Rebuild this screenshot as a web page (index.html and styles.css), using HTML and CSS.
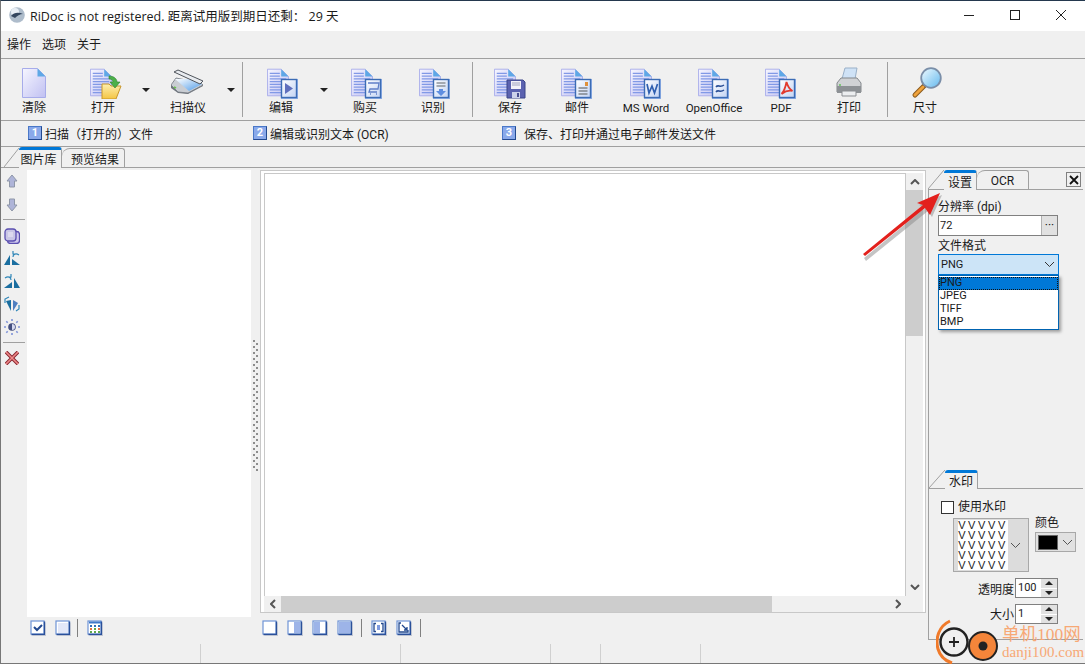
FILE: index.html
```html
<!doctype html>
<html lang="zh-CN">
  <head>
    <meta charset="UTF-8" />
    <title>RiDoc</title>
    <link rel="stylesheet" href="styles.css">
  </head>
  <body>
    <svg class="defs" width="0" height="0">
      <defs>
        <linearGradient id="pg" x1="0" y1="0" x2="1" y2="1">
          <stop offset="0" stop-color="#f6f6ff"/>
          <stop offset="1" stop-color="#c0c0f2"/>
        </linearGradient>
        <linearGradient id="badge" x1="0" y1="0" x2="1" y2="1">
          <stop offset="0" stop-color="#ffffff"/>
          <stop offset="1" stop-color="#c3d4f4"/>
        </linearGradient>
        <linearGradient id="lens" x1="0" y1="0" x2="1" y2="1">
          <stop offset="0" stop-color="#f0fbff"/>
          <stop offset="1" stop-color="#62b8ee"/>
        </linearGradient>
        <linearGradient id="glass" x1="0" y1="0" x2="1" y2="1">
          <stop offset="0" stop-color="#ffffff"/>
          <stop offset="1" stop-color="#4f9be8"/>
        </linearGradient>
        <linearGradient id="folder" x1="0" y1="0" x2="0" y2="1">
          <stop offset="0" stop-color="#fdeeb0"/>
          <stop offset="1" stop-color="#f4c542"/>
        </linearGradient>
        <symbol id="page" viewBox="0 0 24 32">
          <path d="M.5 1.500h15l8 8v21H.5z" fill="url(#pg)" stroke="#a7acea"/>
          <path d="M15.500 1.500l8 8h-8z" fill="#5ea8e6"/>
        </symbol>
        <symbol id="page-lines" viewBox="0 0 24 32">
          <use href="#page" width="24" height="32"/>
          <path d="M3 6h11M3 9h11M3 12h18M3 15h18M3 18h18M3 21h18M3 24h18M3 27h18" stroke="#8199e6" stroke-width="1.300"/>
        </symbol>
        <symbol id="doc-badge" viewBox="0 0 32 32">
          <use href="#page-lines" width="22" height="31"/>
          <rect x="14" y="12" width="17" height="20" fill="#8fb0e6"/>
          <rect x="14.500" y="12.500" width="15" height="18" fill="url(#badge)" stroke="#3c6cb4" stroke-width="1.400"/>
        </symbol>
        <symbol id="mini" viewBox="0 0 16 16">
          <rect x="1" y="1" width="13" height="13" fill="#fff" stroke="#6f94d6" stroke-width="1.200"/>
          <path d="M14.500 1.500v13h-13" fill="none" stroke="#2a509a" stroke-width="1.400"/>
          <path d="M16 3v13H3" fill="none" stroke="#b9bdc6"/>
        </symbol>
      </defs>
    </svg>

    <div class="window">
      <div class="titlebar">
        <svg class="app-icon" width="16" height="16" viewBox="0 0 16 16">
          <circle cx="8" cy="8" r="7.800" fill="#aebccb"/>
          <circle cx="6" cy="5" r="4" fill="#e8eef5"/>
          <path d="M2 9c3-4 8-4 12-2-3 0-6 2-8 4z" fill="#34465f"/>
        </svg>
        <span class="title-text">RiDoc is not registered. 距离试用版到期日还剩： 29 天</span>
        <div class="win-buttons">
          <svg width="12" height="12" viewBox="0 0 12 12"><path d="M1 6.500h10" stroke="#222"/></svg>
          <svg width="12" height="12" viewBox="0 0 12 12"><rect x="1.500" y="1.500" width="9" height="9" fill="none" stroke="#222"/></svg>
          <svg width="12" height="12" viewBox="0 0 12 12"><path d="M1 1l10 10M11 1L1 11" stroke="#222"/></svg>
        </div>
      </div>

      <div class="menubar">
        <span>操作</span>
        <span>选项</span>
        <span>关于</span>
      </div>

      <div class="toolbar">
        <div class="tool w66">
          <svg width="24" height="32"><use href="#page" width="24" height="32"/></svg>
          <span>清除</span>
        </div>
        <div class="tool w72">
          <svg width="34" height="32" class="nudge">
            <use href="#page-lines" x="2" width="22" height="31"/>
            <path d="M14 17h7l2 2h10l-5 13H14z" fill="url(#folder)" stroke="#c8962a"/>
            <path d="M21 9c5 0 8 3 8 6h3l-5 6-5-6h3c0-2-2-3-4-3z" fill="#4cb04a" stroke="#2d7f2c" stroke-width=".6"/>
          </svg>
          <span>打开</span>
        </div>
        <div class="drop w14"></div>
        <div class="tool w70">
          <svg width="34" height="32" viewBox="0 0 34 32">
            <path d="M0 18l5-7 25 5 2 2-15 8-10-1z" fill="#c9cdd3" stroke="#858b93"/>
            <path d="M4 12h17l10 5-13 7z" fill="url(#glass)"/>
            <path d="M3 5l4-2 25 11-3 3z" fill="#e8ebef" stroke="#50555c"/>
            <path d="M0 18v3l7 5 10 1 15-8v-1l-15 8-10-1z" fill="#6f757d"/>
            <path d="M3 20l2 1" stroke="#69c24d" stroke-width="1.600"/>
          </svg>
          <span>扫描仪</span>
        </div>
        <div class="drop w16"></div>
        <div class="vsep w6"></div>
        <div class="tool w72">
          <svg width="32" height="32" class="nudge">
            <use href="#doc-badge" width="32" height="32"/>
            <path d="M18 16l8 5.500-8 5.500z" fill="#5f6fbd"/>
          </svg>
          <span>编辑</span>
        </div>
        <div class="drop w14"></div>
        <div class="tool w68">
          <svg width="32" height="32" class="nudge">
            <use href="#doc-badge" width="32" height="32"/>
            <path d="M17 16h11l-1 6h-8l-1 3h8M19 27h1M25 27h1" fill="none" stroke="#5f7fc8" stroke-width="1.300"/>
          </svg>
          <span>购买</span>
        </div>
        <div class="tool w68">
          <svg width="32" height="32" class="nudge">
            <use href="#doc-badge" width="32" height="32"/>
            <path d="M17.500 16h9M17.500 19h9" stroke="#8d9299" stroke-width="1.600"/>
            <path d="M20 22h4v2h3l-5 5-5-5h3z" fill="#5f8ee0"/>
          </svg>
          <span>识别</span>
        </div>
        <div class="vsep w10"></div>
        <div class="tool w66">
          <svg width="32" height="32">
            <use href="#page-lines" width="22" height="31"/>
            <path d="M13 13h16l2 2v16H13z" fill="#5b62b0" stroke="#3a4488"/>
            <rect x="17" y="14" width="10" height="8" fill="#f2f2fa"/>
            <path d="M18 16h8M18 18h8" stroke="#a0a4c0"/>
            <rect x="18" y="25" width="8" height="6" fill="#cdd2ea"/>
            <rect x="23" y="26" width="2" height="4" fill="#4a4f90"/>
          </svg>
          <span>保存</span>
        </div>
        <div class="tool w68">
          <svg width="32" height="32">
            <use href="#doc-badge" width="32" height="32"/>
            <path d="M17.500 21h9M17.500 24h9M17.500 27h9" stroke="#80858c" stroke-width="1.300"/>
            <rect x="24" y="15" width="3" height="4" fill="#e0913a"/>
          </svg>
          <span>邮件</span>
        </div>
        <div class="tool w70">
          <svg width="32" height="32">
            <use href="#doc-badge" width="32" height="32"/>
            <path d="M17 17l2 9 3-7 2.500 7 3-9" fill="none" stroke="#2f5fb0" stroke-width="1.700"/>
          </svg>
          <span class="latin">MS Word</span>
        </div>
        <div class="tool w66">
          <svg width="32" height="32">
            <use href="#doc-badge" width="32" height="32"/>
            <path d="M18 20c2-3 4 1 8-2M18 25c2-3 4 1 8-2" fill="none" stroke="#2a4f96" stroke-width="1.500"/>
          </svg>
          <span class="latin">OpenOffice</span>
        </div>
        <div class="tool w68">
          <svg width="32" height="32">
            <use href="#doc-badge" width="32" height="32"/>
            <path d="M21.500 15c-1 5-2 9-5 12 4-3 7-4 11-3-3-2-5-5-6-9z" fill="none" stroke="#e23a2e" stroke-width="1.800"/>
          </svg>
          <span class="latin">PDF</span>
        </div>
        <div class="tool w68">
          <svg width="26" height="32" viewBox="0 0 26 32">
            <path d="M9 1h12l-2 11H6z" fill="#cfe2f6" stroke="#9ab0c8"/>
            <path d="M1 16l4-5h16l4 5v9H1z" fill="#d0d2d5" stroke="#83878b"/>
            <path d="M1 19h24v7H1z" fill="#8d9195"/>
            <path d="M6 24h14v5H6z" fill="#eceef0" stroke="#8a8d91"/>
            <circle cx="4" cy="18" r="1" fill="#63c35a"/>
          </svg>
          <span>打印</span>
        </div>
        <div class="vsep w8"></div>
        <div class="tool w68">
          <svg width="32" height="32" viewBox="0 0 32 32" class="nudge">
            <path d="M4 28L13 19" stroke="#8a5a1c" stroke-width="5" stroke-linecap="round"/>
            <path d="M4 28L12 20" stroke="#f0a33c" stroke-width="3" stroke-linecap="round"/>
            <circle cx="20" cy="11" r="9.800" fill="url(#lens)" stroke="#7a8ea8" stroke-width="1.800"/>
          </svg>
          <span>尺寸</span>
        </div>
      </div>

      <div class="steps">
        <div class="step step-one"><i class="step-num">1</i>扫描（打开的）文件</div>
        <div class="step step-two"><i class="step-num">2</i>编辑或识别文本 (OCR)</div>
        <div class="step step-three"><i class="step-num">3</i>保存、打印并通过电子邮件发送文件</div>
      </div>

      <div class="tabstrip">
        <svg class="slant" width="15" height="20" viewBox="0 0 15 20"><path d="M0 20L15 1" stroke="#a0a0a0" fill="none"/></svg>
        <div class="tab tab-active gallery-tab">图片库</div>
        <div class="tab tab-plain preview-tab">预览结果</div>
      </div>

      <div class="main">
        <div class="rail">
          <svg width="14" height="14" viewBox="0 0 14 14"><path d="M7 1l5 6H9.500v6h-5V7H2z" fill="#aeb4d8" stroke="#8f97a8"/></svg>
          <svg class="rail-down" width="14" height="14" viewBox="0 0 14 14"><path d="M7 13l5-6H9.500V1h-5v6H2z" fill="#aeb4d8" stroke="#8f97a8"/></svg>
          <div class="rail-sep"></div>
          <svg width="16" height="16" viewBox="0 0 16 16"><rect x="3.500" y="3.500" width="12" height="12" rx="3" fill="#cfc9ee" stroke="#5b4fb0" stroke-width="1.300"/><rect x="1" y="1" width="11" height="12" rx="3" fill="#c9c6e6" stroke="#5b4fb0" stroke-width="1.300"/><rect x="4" y="4" width="5" height="5" fill="#dcd9ee"/></svg>
          <svg class="rail-tight" width="16" height="16" viewBox="0 0 16 16"><path d="M0 15L6 5v10z" fill="#1a6ea0"/><path d="M8 15V9l8 6z" fill="#1a6ea0"/><path d="M9 7c0-3 3-4 6-2M9 1v3h3" fill="none" stroke="#2f86b8" stroke-width="1.200"/></svg>
          <svg width="16" height="16" viewBox="0 0 16 16"><path d="M16 15L10 5v10z" fill="#1a6ea0"/><path d="M8 15V9l-8 6z" fill="#1a6ea0"/><path d="M7 7c0-3-3-4-6-2M7 1v3H4" fill="none" stroke="#2f86b8" stroke-width="1.200"/></svg>
          <svg width="16" height="16" viewBox="0 0 16 16"><path d="M2 5l5-1v11z" fill="#1a6ea0"/><path d="M9 4l5 3-5 8z" fill="#4e7fc0"/><path d="M1 7V3l4-2M15 9v4l-3 2" fill="none" stroke="#2f86b8" stroke-width="1.200"/></svg>
          <svg width="16" height="16" viewBox="0 0 16 16"><circle cx="8" cy="8" r="3.800" fill="#444f80"/><path d="M8 5a3 3 0 0 1 0 6z" fill="#d5d9f0"/><path d="M8 0v2M8 14v2M0 8h2M14 8h2M2.300 2.300l1.400 1.400M12.300 12.300l1.400 1.400M2.300 13.700l1.400-1.400M12.300 3.700l1.400-1.400" stroke="#7f93d8" stroke-width="1.600"/></svg>
          <div class="rail-sep"></div>
          <svg width="14" height="14" viewBox="0 0 14 14"><path d="M1 1l12 12M13 1L1 13" stroke="#8a2630" stroke-width="3.600"/><path d="M1 1l12 12M13 1L1 13" stroke="#f08a8a" stroke-width="1.600"/></svg>
        </div>

        <div class="gallery-col">
          <div class="gallery"></div>
          <div class="minibar minibar-gallery">
            <svg width="16" height="16"><use href="#mini" width="16" height="16"/><path d="M4 7l3 3 5-5" fill="none" stroke="#23498f" stroke-width="2"/></svg>
            <svg width="16" height="16"><use href="#mini" width="16" height="16"/><rect x="3" y="3" width="10" height="10" fill="#e3e8f8"/></svg>
            <div class="mini-sep"></div>
            <svg width="16" height="16"><use href="#mini" width="16" height="16"/><path d="M2 2.500h12" stroke="#3f78c8" stroke-width="2"/><path d="M3 6h2M7 6h2M11 6h2" stroke="#2f6fb8" stroke-width="2"/><path d="M3 9h2M11 9h2" stroke="#e0703c" stroke-width="2"/><path d="M7 9h2M3 12h2M7 12h2M11 12h2" stroke="#5fa84c" stroke-width="2"/></svg>
          </div>
        </div>

        <div class="splitter"></div>

        <div class="preview-col">
          <div class="preview">
            <div class="preview-top">
              <div class="canvas"></div>
              <div class="vscroll">
                <svg width="10" height="6" viewBox="0 0 10 6"><path d="M1 5l4-4 4 4" fill="none" stroke="#555" stroke-width="2"/></svg>
                <div class="vtrack"><div class="vthumb"></div></div>
                <svg width="10" height="6" viewBox="0 0 10 6"><path d="M1 1l4 4 4-4" fill="none" stroke="#555" stroke-width="2"/></svg>
              </div>
            </div>
            <div class="hscroll">
              <svg width="6" height="10" viewBox="0 0 6 10"><path d="M5 1L1 5l4 4" fill="none" stroke="#555" stroke-width="2"/></svg>
              <div class="htrack"><div class="hthumb"></div></div>
              <svg width="6" height="10" viewBox="0 0 6 10"><path d="M1 1l4 4-4 4" fill="none" stroke="#555" stroke-width="2"/></svg>
            </div>
          </div>
          <div class="minibar minibar-view">
            <svg width="16" height="16"><use href="#mini" width="16" height="16"/></svg>
            <svg width="16" height="16"><use href="#mini" width="16" height="16"/><rect x="7" y="2" width="6" height="11" fill="#9db4e8"/></svg>
            <svg width="16" height="16"><use href="#mini" width="16" height="16"/><rect x="2" y="2" width="6" height="11" fill="#9db4e8"/></svg>
            <svg width="16" height="16"><use href="#mini" width="16" height="16"/><rect x="2" y="2" width="11" height="11" fill="#9db4e8"/></svg>
            <div class="mini-sep"></div>
            <svg width="16" height="16"><use href="#mini" width="16" height="16"/><path d="M5 3.500H3v8h2M10 3.500h2v8h-2" fill="none" stroke="#23498f" stroke-width="1.300"/><rect x="6" y="5" width="3" height="5" fill="#7f9be0"/></svg>
            <svg width="16" height="16"><use href="#mini" width="16" height="16"/><path d="M5 3H3v9h9v-2M6 5l5 5M11 7v3H8" fill="none" stroke="#23498f" stroke-width="1.300"/></svg>
            <div class="mini-sep"></div>
          </div>
        </div>

        <div class="side">
          <div class="side-tabs">
            <svg class="slant" width="16" height="19" viewBox="0 0 16 19"><path d="M0 19L16 0" stroke="#a0a0a0" fill="none"/></svg>
            <div class="tab tab-active side-tab">设置</div>
            <div class="tab tab-plain side-tab-ocr">OCR</div>
            <div class="side-close">
              <svg width="10" height="10" viewBox="0 0 10 10"><path d="M1 1l8 8M9 1L1 9" stroke="#111" stroke-width="1.800"/></svg>
            </div>
          </div>
          <div class="side-body">
            <div class="settings">
              <div class="field-label">分辨率 (dpi)</div>
              <div class="dpi-input">
                <span>72</span>
                <div class="dots-btn">···</div>
              </div>
              <div class="field-label format-label">文件格式</div>
              <div class="combo">
                <span>PNG</span>
                <svg width="11" height="7" viewBox="0 0 11 7"><path d="M1 1l4.500 4.500L10 1" fill="none" stroke="#333"/></svg>
              </div>
              <ul class="combo-list">
                <li class="selected">PNG</li>
                <li>JPEG</li>
                <li>TIFF</li>
                <li>BMP</li>
              </ul>
            </div>

            <div class="side-tabs mark-tabs">
              <svg class="slant" width="16" height="18" viewBox="0 0 16 18"><path d="M0 18L16 0" stroke="#a0a0a0" fill="none"/></svg>
              <div class="tab tab-active side-tab">水印</div>
            </div>
            <div class="mark">
              <label class="use-mark"><i class="check"></i>使用水印</label>
              <div class="mark-row">
                <div class="pattern">
                  <div class="pattern-swatch">
                    <span>VVVVV</span><span>VVVVV</span><span>VVVVV</span><span>VVVVV</span><span>VVVVV</span>
                  </div>
                  <svg width="11" height="7" viewBox="0 0 11 7"><path d="M1 1l4.500 4.500L10 1" fill="none" stroke="#555"/></svg>
                </div>
                <div class="color-col">
                  <div>颜色</div>
                  <div class="color-combo">
                    <i class="swatch"></i>
                    <svg width="11" height="7" viewBox="0 0 11 7"><path d="M1 1l4.500 4.500L10 1" fill="none" stroke="#555"/></svg>
                  </div>
                </div>
              </div>
              <div class="spin-row">
                <span>透明度</span>
                <div class="spin"><b>100</b><div class="spin-btns"><i class="up"></i><i class="down"></i></div></div>
              </div>
              <div class="spin-row">
                <span class="size-label">大小</span>
                <div class="spin"><b>1</b><div class="spin-btns"><i class="up"></i><i class="down"></i></div></div>
              </div>
            </div>
          </div>
        </div>
      </div>

      <div class="statusbar">
        <div></div><div></div><div></div><div></div><div></div>
      </div>
    </div>

    <!-- red annotation arrow drawn over the app -->
    <svg class="annotation" width="90" height="75" viewBox="860 190 90 75">
      <path d="M864 258L925 208l-6-3 23-10-10 22-4-6-62 50z" fill="#8a8a8a" opacity=".5"/>
      <path d="M863 254L923 205l-6-2 23-10-10 22-5-7-60 48z" fill="#e3201c"/>
    </svg>

    <!-- site watermark stamped on the screenshot -->
    <div class="stamp">
      <svg width="70" height="50" viewBox="0 0 70 50">
        <path d="M14 3C3 8 -1 20 2 31c2 7 8 12 14 14" fill="none" stroke="#f07a2a" stroke-width="3"/>
        <circle cx="18" cy="24" r="13.500" fill="#f0f0f0" stroke="#222" stroke-width="2.400"/>
        <path d="M13 24h10M18 19v10" stroke="#222" stroke-width="1.800"/>
        <circle cx="47" cy="28" r="14" fill="#f4853a" stroke="#222" stroke-width="2"/>
        <circle cx="47" cy="28" r="4.500" fill="#222"/>
      </svg>
      <div class="stamp-text">
        <div class="stamp-cn">单机100网</div>
        <div class="stamp-en">danji100.com</div>
      </div>
    </div>
  </body>
</html>
```

FILE: styles.css
```css
* {
  box-sizing: border-box;
}
html,
body {
  margin: 0;
  padding: 0;
}
body {
  width: 1085px;
  height: 664px;
  overflow: hidden;
  position: relative;
  font-family: Roboto, "Noto Sans CJK SC", sans-serif;
  font-size: 12px;
  color: #1a1a1a;
}
.defs {
  position: absolute;
}
svg {
  display: block;
  flex: none;
}
.window {
  width: 1085px;
  height: 664px;
  display: flex;
  flex-direction: column;
  background-color: #f0f0f0;
  border-top: 1px solid #24384e;
  border-left: 1px solid #777;
  border-bottom: 1px solid #777;
}

/* title bar */
.titlebar {
  height: 30px;
  background-color: #fff;
  display: flex;
  align-items: center;
  padding-left: 8px;
  padding-bottom: 2px;
}
.title-text {
  margin-left: 5px;
  font-family: "Open Sans", "Noto Sans CJK SC", sans-serif;
  font-size: 12.5px;
  white-space: nowrap;
}
.win-buttons {
  margin-left: auto;
  margin-right: 18px;
  display: flex;
  gap: 34px;
}

/* menu */
.menubar {
  height: 28px;
  display: flex;
  align-items: center;
  gap: 11px;
  padding: 0 0 2px 6px;
  border-bottom: 1px solid #a0a0a0;
}

/* main toolbar */
.toolbar {
  height: 62px;
  display: flex;
  border-bottom: 1px solid #a0a0a0;
}
.tool {
  display: flex;
  flex-direction: column;
  align-items: center;
  padding-top: 8px;
  white-space: nowrap;
  line-height: 15px;
}
.tool svg {
  height: 32px;
  margin-bottom: 2px;
}
.tool .nudge {
  margin-left: 3px;
}
.tool .latin {
  font-size: 11.5px;
}
.w6 { width: 6px; }
.w8 { width: 8px; }
.w10 { width: 10px; }
.w14 { width: 14px; }
.w16 { width: 16px; }
.w66 { width: 66px; }
.w68 { width: 68px; }
.w70 { width: 70px; }
.w72 { width: 72px; }
.drop {
  display: flex;
  justify-content: center;
  padding-top: 29px;
}
.drop::before {
  content: "";
  width: 0;
  height: 0;
  border-left: 4px solid transparent;
  border-right: 4px solid transparent;
  border-top: 4px solid #222;
}
.vsep {
  display: flex;
  justify-content: center;
  padding: 3px 0;
}
.vsep::before {
  content: "";
  width: 1px;
  background-color: #a0a0a0;
}

/* numbered steps */
.steps {
  height: 26px;
  display: flex;
  align-items: center;
  padding: 0 0 1px 27px;
  border-bottom: 1px solid #a0a0a0;
}
.step {
  display: flex;
  align-items: center;
  white-space: nowrap;
}
.step-one {
  width: 225px;
}
.step-two {
  width: 249px;
}
.step-num {
  width: 14px;
  height: 14px;
  margin-right: 3px;
  font-style: normal;
  font-weight: 700;
  font-size: 11px;
  line-height: 12px;
  text-align: center;
  color: #fff;
  background-color: #8aa9ea;
  border: 1px solid #4a78c8;
  border-right-color: #23498f;
  border-bottom-color: #23498f;
}
.step-three .step-num {
  margin-right: 8px;
}

/* tabs */
.tabstrip {
  height: 21px;
  display: flex;
  align-items: flex-end;
  padding-left: 3px;
  border-bottom: 1px solid #a0a0a0;
}
.tab {
  display: flex;
  align-items: center;
  justify-content: center;
}
.tab-active {
  width: 43px;
  height: 21px;
  margin-bottom: -1px;
  background-color: #f0f0f0;
  border-top: 3px solid #0078d7;
  border-right: 1px solid #a0a0a0;
  padding-bottom: 1px;
  border-radius: 3px 3px 0 0;
}
.gallery-tab {
  padding-right: 3px;
}
.tab-plain {
  width: 63px;
  height: 19px;
  background-color: #f0f0f0;
  border: 1px solid #a0a0a0;
  border-bottom: 0;
  border-left: 0;
  border-radius: 8px 3px 0 0;
}
.preview-tab {
  padding-left: 4px;
  padding-top: 1px;
}

/* main area */
.main {
  flex: 1;
  min-height: 0;
  display: flex;
}
.rail {
  width: 26px;
  padding: 6px 4px 0 0;
  display: flex;
  flex-direction: column;
  align-items: center;
  gap: 7px;
}
.rail-down {
  margin-top: 3px;
}
.rail-tight {
  margin-top: -1px;
}
.rail-sep {
  width: 22px;
  height: 1px;
  flex: none;
  align-self: flex-start;
  margin: 0 0 1px 2px;
  background-color: #a0a0a0;
}
.gallery-col {
  width: 224px;
  display: flex;
  flex-direction: column;
}
.gallery {
  height: 447px;
  margin-top: 2px;
  background-color: #fff;
}
.minibar {
  height: 23px;
  display: flex;
  align-items: flex-start;
  gap: 9px;
  padding-top: 3px;
}
.mini-sep {
  width: 1px;
  height: 18px;
  margin-top: -1px;
  margin-left: -1px;
  background-color: #808080;
}
.minibar-gallery {
  padding-left: 3px;
}
.minibar-gallery .mini-sep {
  margin-left: -3px;
}
.minibar-view {
  margin-top: 4px;
  padding-left: 2px;
}
.splitter {
  width: 5px;
  margin: 172px 2px 0;
  height: 132px;
  background-image:
    radial-gradient(circle at 1px 1px, #8c8c8c 1.2px, transparent 1.3px),
    radial-gradient(circle at 1px 1px, #8c8c8c 1.2px, transparent 1.3px);
  background-size: 6px 6px;
  background-position: 0 0, 3px 3px;
}
.preview-col {
  width: 668px;
  display: flex;
  flex-direction: column;
}
.preview {
  height: 443px;
  margin-top: 2px;
  margin-right: 2px;
  background-color: #fff;
  border: 1px solid #c8c8c8;
  padding: 2px 2px 0 3px;
  display: flex;
  flex-direction: column;
}
.preview-top {
  flex: 1;
  min-height: 0;
  display: flex;
}
.canvas {
  flex: 1;
  background-color: #fff;
  border: 1px solid #c8c8c8;
  border-bottom: 0;
}
.vscroll {
  width: 17px;
  background-color: #f0f0f0;
  display: flex;
  flex-direction: column;
  align-items: center;
  padding: 6px 0;
}
.vtrack {
  flex: 1;
  width: 100%;
  margin: 5px 0;
}
.vthumb {
  width: 100%;
  height: 146px;
  background-color: #cdcdcd;
}
.hscroll {
  height: 16px;
  background-color: #f0f0f0;
  display: flex;
  align-items: center;
  padding: 0 22px 0 6px;
}
.htrack {
  flex: 1;
  height: 100%;
  margin: 0 5px;
}
.hthumb {
  width: 491px;
  height: 100%;
  background-color: #cdcdcd;
}

/* side panel */
.side {
  width: 155px;
  height: 472px;
  padding-top: 2px;
  display: flex;
  flex-direction: column;
}
.side-tabs {
  height: 20px;
  flex: none;
  display: flex;
  align-items: flex-end;
  border-bottom: 1px solid #a0a0a0;
}
.side-tab {
  width: 33px;
  height: 20px;
}
.side-tab-ocr {
  width: 52px;
  height: 19px;
  padding-top: 2px;
}
.side-close {
  width: 15px;
  height: 15px;
  margin-left: auto;
  margin-right: 2px;
  margin-bottom: 2px;
  border: 1px solid #808080;
  display: flex;
  align-items: center;
  justify-content: center;
}
.side-body {
  flex: 1;
  min-height: 0;
  display: flex;
  flex-direction: column;
  border-left: 1px solid #a0a0a0;
  border-bottom: 1px solid #a0a0a0;
}
.settings {
  height: 280px;
  padding: 9px 0 0 9px;
}
.field-label {
  line-height: 16px;
}
.format-label {
  margin-top: 2px;
}
.dpi-input {
  width: 120px;
  height: 21px;
  background-color: #fff;
  border: 1px solid #808080;
  display: flex;
  align-items: center;
  justify-content: space-between;
  padding-left: 1px;
  font-size: 11px;
}
.dots-btn {
  width: 16px;
  height: 19px;
  background-color: #e1e1e1;
  border-left: 1px solid #b0b0b0;
  text-align: center;
  line-height: 19px;
  font-size: 12px;
}
.combo {
  width: 121px;
  height: 21px;
  background-color: #cce4f7;
  border: 1px solid #0078d7;
  display: flex;
  align-items: center;
  justify-content: space-between;
  padding: 0 3px 0 2px;
  font-size: 11px;
}
.combo-list {
  list-style: none;
  margin: 0;
  padding: 1px 0 0;
  width: 121px;
  height: 55px;
  background-color: #fff;
  border: 1px solid #0063b1;
  box-shadow: 2px 2px 3px rgba(0, 0, 0, 0.35);
  font-size: 11px;
  line-height: 12px;
}
.combo-list li {
  height: 13px;
  padding-left: 1px;
}
.combo-list .selected {
  background-color: #0078d7;
  outline: 1px dotted #111;
  outline-offset: -1px;
}
.mark-tabs {
  height: 19px;
}
.mark-tabs .side-tab {
  height: 19px;
}
.mark {
  flex: 1;
  padding: 11px 0 0 12px;
}
.use-mark {
  display: flex;
  align-items: center;
  gap: 4px;
  line-height: 14px;
}
.check {
  width: 13px;
  height: 13px;
  background-color: #fff;
  border: 1px solid #333;
}
.mark-row {
  display: flex;
  gap: 6px;
  margin: 4px 0 0 12px;
}
.pattern {
  width: 76px;
  height: 54px;
  background-color: #dcdcdc;
  border: 1px solid #a8a8a8;
  display: flex;
  align-items: center;
  justify-content: space-between;
  padding: 0 7px 0 4px;
}
.pattern-swatch {
  width: 50px;
  height: 50px;
  background-color: #fff;
  display: flex;
  flex-direction: column;
  justify-content: center;
  font-family: "Liberation Sans", sans-serif;
  font-size: 11px;
  line-height: 10px;
  letter-spacing: 2.6px;
  text-align: center;
}
.color-col {
  line-height: 14px;
  margin-top: -2px;
}
.color-combo {
  width: 41px;
  height: 20px;
  margin-top: 2px;
  background-color: #e1e1e1;
  border: 1px solid #a8a8a8;
  display: flex;
  align-items: center;
  padding-left: 2px;
  gap: 4px;
}
.swatch {
  width: 20px;
  height: 15px;
  background-color: #000;
  border: 1px solid #666;
}
.spin-row {
  display: flex;
  justify-content: flex-end;
  align-items: center;
  gap: 1px;
  width: 117px;
  margin-top: 6px;
}
.size-label {
  margin-bottom: 1px;
}
.spin {
  width: 43px;
  height: 20px;
  background-color: #fff;
  border: 1px solid #808080;
  display: flex;
  justify-content: space-between;
  font-size: 11px;
  line-height: 18px;
  padding-left: 2px;
}
.spin b {
  font-weight: 400;
}
.spin-btns {
  width: 16px;
  display: flex;
  flex-direction: column;
  gap: 1px;
}
.spin-btns i {
  flex: 1;
  background-color: #e1e1e1;
  display: flex;
  align-items: center;
  justify-content: center;
}
.spin-btns i::before {
  content: "";
  border-left: 4px solid transparent;
  border-right: 4px solid transparent;
}
.spin-btns .up::before {
  border-bottom: 4px solid #222;
}
.spin-btns .down::before {
  border-top: 4px solid #222;
}

/* status bar */
.statusbar {
  height: 22px;
  display: flex;
  padding: 3px 0 0;
}
.statusbar div {
  width: 200px;
  height: 19px;
  border-right: 1px solid #d0d0d0;
}
.statusbar div:nth-child(3) {
  width: 150px;
}
.statusbar div:nth-child(4) {
  width: 50px;
}
.statusbar div:nth-child(5) {
  width: 100px;
}

/* overlays */
.annotation {
  position: absolute;
  left: 860px;
  top: 190px;
}
.stamp {
  position: absolute;
  left: 936px;
  top: 618px;
  width: 150px;
  display: flex;
}
.stamp svg {
  margin-right: -4px;
}
.stamp-text {
  color: #f7a875;
  white-space: nowrap;
}
.stamp-cn {
  font-family: "Liberation Serif", "Noto Sans CJK SC", serif;
  font-size: 17.5px;
  line-height: 22px;
  margin-top: 5px;
}
.stamp-en {
  font-family: "Liberation Serif", serif;
  font-size: 15px;
  line-height: 15px;
}
```
